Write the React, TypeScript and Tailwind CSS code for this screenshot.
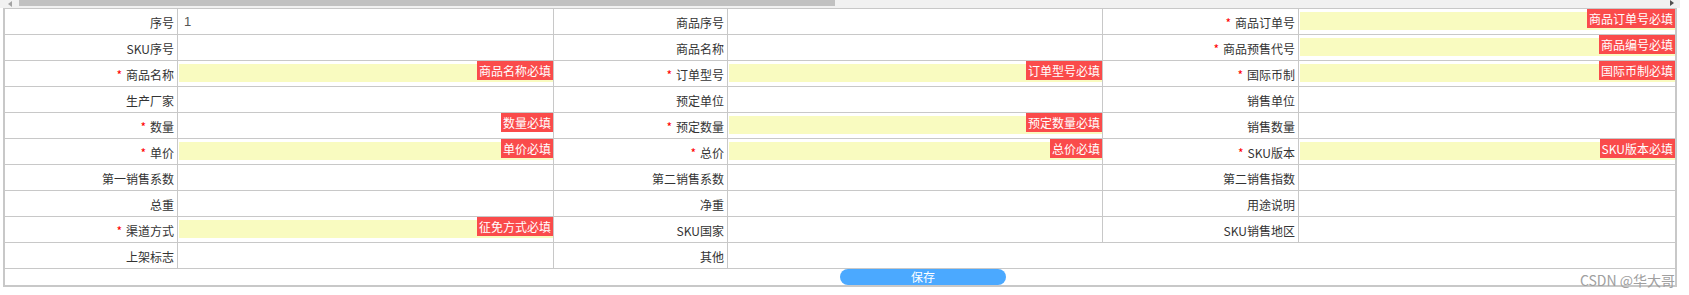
type Pair = {
  label: string;
  req?: boolean;
  value?: string;
  input?: boolean;
  badge?: string;
  span?: boolean;
};

const rows: Pair[][] = [
  [
    { label: "序号", value: "1" },
    { label: "商品序号" },
    { label: "商品订单号", req: true, input: true, badge: "商品订单号必填" },
  ],
  [
    { label: "SKU序号" },
    { label: "商品名称" },
    { label: "商品预售代号", req: true, input: true, badge: "商品编号必填" },
  ],
  [
    { label: "商品名称", req: true, input: true, badge: "商品名称必填" },
    { label: "订单型号", req: true, input: true, badge: "订单型号必填" },
    { label: "国际币制", req: true, input: true, badge: "国际币制必填" },
  ],
  [{ label: "生产厂家" }, { label: "预定单位" }, { label: "销售单位" }],
  [
    { label: "数量", req: true, badge: "数量必填" },
    { label: "预定数量", req: true, input: true, badge: "预定数量必填" },
    { label: "销售数量" },
  ],
  [
    { label: "单价", req: true, input: true, badge: "单价必填" },
    { label: "总价", req: true, input: true, badge: "总价必填" },
    { label: "SKU版本", req: true, input: true, badge: "SKU版本必填" },
  ],
  [{ label: "第一销售系数" }, { label: "第二销售系数" }, { label: "第二销售指数" }],
  [{ label: "总重" }, { label: "净重" }, { label: "用途说明" }],
  [
    { label: "渠道方式", req: true, input: true, badge: "征免方式必填" },
    { label: "SKU国家" },
    { label: "SKU销售地区" },
  ],
  [{ label: "上架标志" }, { label: "其他", span: true }],
];

function LabelCell({ pair }: { pair: Pair }) {
  return (
    <div className="h-[26px] border-b border-r border-[#c8c8c8] flex items-center justify-end pr-[3px] pt-[2px] text-[12px] leading-none text-[#333]">
      {pair.req && <span className="text-[#f00] mr-[4px]">*</span>}
      {pair.label}
    </div>
  );
}

function ValueCell({ pair, last }: { pair: Pair; last: boolean }) {
  const span = pair.span ? "col-span-3" : "";
  const edge = last || pair.span ? "" : "border-r";
  return (
    <div className={`relative h-[26px] border-b border-[#c8c8c8] ${edge} ${span}`}>
      {pair.value && (
        <div className="pl-[6px] pt-[1px] font-['Liberation_Sans',sans-serif] text-[13px] leading-[24px] text-[#555]">
          {pair.value}
        </div>
      )}
      {pair.input && <div className="mt-[3px] ml-[1px] h-[18px] bg-[#f9fbc0]" />}
      {pair.badge && (
        <span className="absolute top-0 right-0 h-[19px] px-[2px] bg-[#fa4b4b] text-white text-[12px] leading-[19px]">
          {pair.badge}
        </span>
      )}
    </div>
  );
}

export default function App() {
  return (
    <div className="relative w-[1689px] h-[295px] bg-white overflow-hidden font-['Noto_Sans_CJK_SC','Liberation_Sans',sans-serif]">
      {/* horizontal scrollbar, cut off at the top */}
      <div className="w-[1680px] h-[8px] bg-[#f1f1f1] flex">
        <div className="w-[19px] h-[6px] flex items-start justify-center">
          <div className="mt-[1px] w-0 h-0 border-y-[3px] border-y-transparent border-r-[4px] border-r-[#a3a3a3]" />
        </div>
        <div className="w-[816px] h-[6px] bg-[#c1c1c1]" />
        <div className="flex-1" />
        <div className="w-[16px] h-[6px] flex items-start justify-center">
          <div className="w-0 h-0 border-y-[3px] border-y-transparent border-l-[4px] border-l-[#505050]" />
        </div>
      </div>

      <div className="ml-[3px] w-[1674px] border-x-2 border-b-2 border-t border-[#c8c8c8]">
        <div className="grid grid-cols-[173px_376px_174px_375px_196px_376px]">
          {rows.map((row, ri) =>
            row.map((pair, pi) => (
              <div key={`${ri}-${pi}`} className="contents">
                <LabelCell pair={pair} />
                <ValueCell pair={pair} last={pi === 2} />
              </div>
            ))
          )}
          <div className="col-span-6 h-[16px]">
            <button className="ml-[50%] w-[166px] h-[16px] rounded-full bg-[#4ba9ff] text-white text-[12px] leading-[16px] flex items-center justify-center">
              保存
            </button>
          </div>
        </div>
      </div>

      <span className="absolute right-[14px] bottom-[8px] text-[14px] leading-none text-[#a0a0a0]">
        CSDN @华大哥
      </span>
    </div>
  );
}
